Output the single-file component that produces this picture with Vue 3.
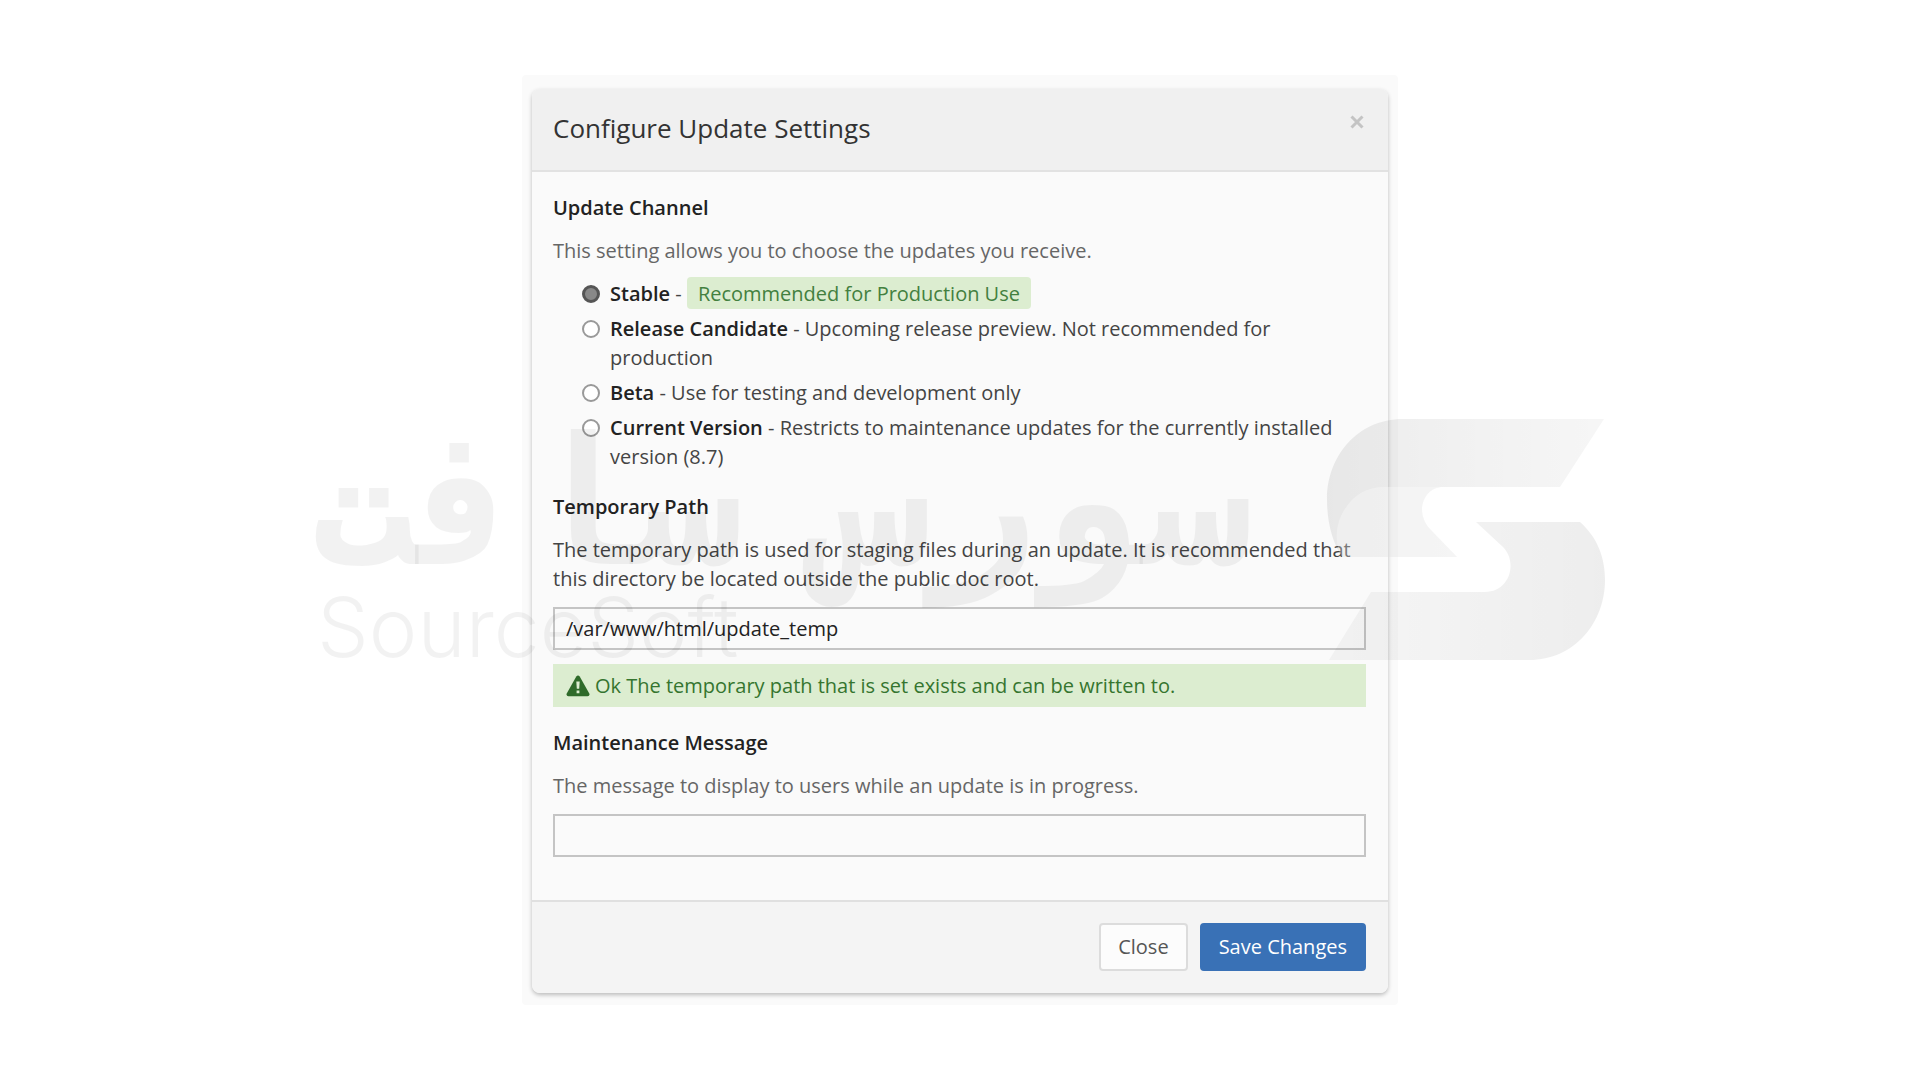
<script setup>
import { ref } from 'vue'

const channels = [
  { id: 'stable', name: 'Stable', badge: 'Recommended for Production Use' },
  { id: 'rc', name: 'Release Candidate', text: 'Upcoming release preview. Not recommended for production' },
  { id: 'beta', name: 'Beta', text: 'Use for testing and development only' },
  { id: 'current', name: 'Current Version', text: 'Restricts to maintenance updates for the currently installed version (8.7)' },
]
const channel = ref('stable')
const tempPath = ref('/var/www/html/update_temp')
const message = ref('')
</script>

<template>
  <main class="page">
    <div class="backdrop">
      <form class="modal" @submit.prevent>
        <header class="modal-header">
          <h1>Configure Update Settings</h1>
          <button type="button" class="dismiss" aria-label="Dismiss">
            <svg viewBox="0 0 14 14" width="14" height="14"><path d="M1.500 1.500 L12.500 12.500 M12.500 1.500 L1.500 12.500" /></svg>
          </button>
        </header>

        <div class="modal-body">
          <fieldset>
            <legend>Update Channel</legend>
            <p class="muted">This setting allows you to choose the updates you receive.</p>
            <div class="options">
              <label v-for="c in channels" :key="c.id" class="option">
                <input v-model="channel" type="radio" name="channel" :value="c.id" />
                <span><strong>{{ c.name }}</strong> - <span v-if="c.badge" class="badge">{{ c.badge }}</span><template v-else>{{ c.text }}</template></span>
              </label>
            </div>
          </fieldset>

          <section>
            <label class="heading" for="temp-path">Temporary Path</label>
            <p>The temporary path is used for staging files during an update. It is recommended that this directory be located outside the public doc root.</p>
            <input id="temp-path" v-model="tempPath" class="field" type="text" />
            <div class="notice" role="status">
              <svg viewBox="0 0 24 22" width="24" height="22">
                <path fill="#2f6b2a" d="M10.300 1.600 Q12 -0.600 13.700 1.600 L23.300 18.500 Q24 21 21.600 21.200 H2.400 Q0 21 0.700 18.500 Z" />
                <path fill="#dcedd0" d="M10.300 6.500 H13.700 L13.200 13.800 H10.800 Z M10.600 15.400 H13.400 V18.200 H10.600 Z" />
              </svg>
              <span>Ok The temporary path that is set exists and can be written to.</span>
            </div>
          </section>

          <section>
            <label class="heading" for="message">Maintenance Message</label>
            <p class="muted">The message to display to users while an update is in progress.</p>
            <input id="message" v-model="message" class="field" type="text" />
          </section>
        </div>

        <footer class="modal-footer">
          <button type="button" class="btn">Close</button>
          <button type="submit" class="btn primary">Save Changes</button>
        </footer>
      </form>
    </div>

    <svg class="watermark" viewBox="312 392 1296 300" aria-hidden="true">
      <defs>
        <linearGradient id="upper" x1="0" y1="0" x2="1" y2="0">
          <stop offset="0" stop-opacity="0.075" />
          <stop offset="0.350" stop-opacity="0.060" />
          <stop offset="1" stop-opacity="0.035" />
        </linearGradient>
        <linearGradient id="lower" x1="0" y1="0" x2="1" y2="0">
          <stop offset="0" stop-opacity="0.035" />
          <stop offset="1" stop-opacity="0.070" />
        </linearGradient>
      </defs>
      <path fill="url(#upper)" d="M1604 419 H1403 C1357 419 1327 457 1327 499 C1327 522 1332 541 1342 557 H1457 L1430 529 C1414 512 1424 487 1443 487 H1560 Z" />
      <path fill="#fff" fill-opacity="0.300" d="M1342 557 C1334 544 1336 526 1341 516 C1350 497 1365 487 1384 487 H1443 C1424 487 1414 512 1430 529 L1457 557 Z" />
      <path fill="url(#lower)" d="M1476 522 H1580 C1598 538 1605 558 1605 580 C1605 622 1575 660 1529 660 H1329 L1371 592 H1485 C1510 592 1518 562 1503 547 Z" />
      <text class="arabic" x="1034" y="564">سورس</text>
      <text class="arabic" x="524" y="564">سافت</text>
      <text class="latin" x="317" y="657">SourceSoft</text>
    </svg>
  </main>
</template>

<style>
body {
  margin: 0;
  background: #fff;
}
</style>

<style scoped>
.page {
  position: relative;
  display: flex;
  justify-content: center;
  padding: 75px 16px;
  overflow: hidden;
  font: 20px/29px "Open Sans", sans-serif;
  color: #444;
}
.backdrop {
  box-sizing: border-box;
  width: 100%;
  max-width: 876px;
  padding: 14px 10px 12px;
  background: #fafafa;
  border-radius: 4px;
}
.modal {
  overflow: hidden;
  background: #fafafa;
  border-radius: 8px;
  box-shadow: 0 2px 4px rgba(0, 0, 0, 0.25);
}
.modal-header {
  display: flex;
  align-items: flex-start;
  justify-content: space-between;
  padding: 21px 22px 23px 21px;
  background: #f0f0f0;
  border-bottom: 2px solid #e2e2e2;
}
h1 {
  margin: 0;
  font-size: 26px;
  line-height: 37px;
  font-weight: 400;
  color: #333;
}
.dismiss {
  display: flex;
  margin: 5px 2px;
  padding: 0;
  border: 0;
  background: none;
}
.dismiss path {
  stroke: #c4c4c4;
  stroke-width: 3;
}
.modal-body {
  padding: 21px 22px 43px 21px;
}
fieldset {
  margin: 0;
  padding: 0;
  border: 0;
}
legend,
.heading {
  display: block;
  padding: 0;
  font-weight: 600;
  color: #222;
}
p {
  margin: 14px 0;
}
.muted {
  color: #666;
}
.options {
  display: flex;
  flex-direction: column;
  gap: 6px;
  margin-bottom: 21px;
  padding-left: 29px;
}
.option {
  display: flex;
  align-items: flex-start;
  gap: 10px;
}
.option input {
  flex: none;
  appearance: none;
  box-sizing: border-box;
  width: 18px;
  height: 18px;
  margin: 6px 0 0;
  border: 2px solid #999;
  border-radius: 50%;
  background: #fff;
}
.option input:checked {
  border: 3px solid #555;
  background: #888;
}
strong {
  font-weight: 600;
  color: #222;
}
.badge {
  padding: 3px 11px 2px;
  border-radius: 4px;
  background: #dcedd0;
  color: #43803f;
}
.field {
  display: block;
  box-sizing: border-box;
  width: 100%;
  height: 43px;
  padding: 0 11px;
  border: 2px solid #c4c4c4;
  background: #fafafa;
  color: #222;
  font: inherit;
}
.notice {
  display: flex;
  align-items: center;
  gap: 5px;
  margin: 14px 0 21px;
  padding: 7px 13px;
  background: #dcedd0;
  color: #35752f;
}
.modal-footer {
  display: flex;
  justify-content: flex-end;
  gap: 12px;
  padding: 21px 22px 22px;
  background: #f4f4f4;
  border-top: 2px solid #e0e0e0;
}
.btn {
  padding: 7px 17px 8px;
  border: 2px solid #dcdcdc;
  border-radius: 4px;
  background: #fcfcfc;
  color: #555;
  font: inherit;
}
.btn.primary {
  border-color: #3971b6;
  background: #3971b6;
  color: #fff;
}
.watermark {
  position: absolute;
  top: 392px;
  left: 50%;
  width: 1296px;
  overflow: visible;
  transform: translateX(-50%);
  pointer-events: none;
}
.watermark text {
  fill: #000;
  fill-opacity: 0.050;
}
.arabic {
  font: 700 178px "DejaVu Sans Mono", monospace;
  text-anchor: middle;
}
.latin {
  font: 300 82px Inter, sans-serif;
}
</style>
